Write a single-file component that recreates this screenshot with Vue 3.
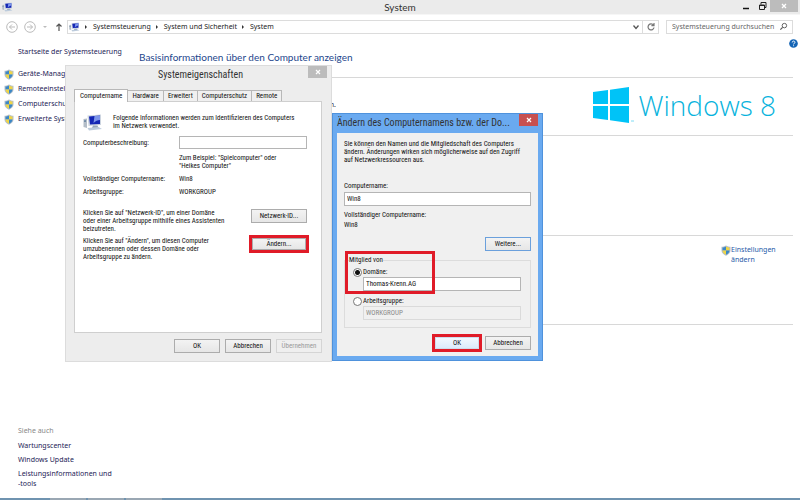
<script setup>
import { ref } from 'vue'

const tasks = ['Geräte-Manager', 'Remoteeinstellungen', 'Computerschutz', 'Erweiterte Systemeinstellungen']
const related = ['Wartungscenter', 'Windows Update', 'Leistungsinformationen und\n-tools']
const crumbs = ['Systemsteuerung', 'System und Sicherheit', 'System']
const tabs = ['Computername', 'Hardware', 'Erweitert', 'Computerschutz', 'Remote']
const activeTab = ref('Computername')
const description = ref('')
const computerName = ref('Win8')
const membership = ref('domain')
const domain = ref('Thomas-Krenn.AG')
const workgroup = ref('WORKGROUP')
const query = ref('')
</script>

<template>
  <svg class="defs" aria-hidden="true">
    <symbol id="shield" viewBox="0 0 20 22">
      <path d="M10 1C7 3 4 3.500 1 3.500V11c0 5 4 8 9 10.500C15 19 19 16 19 11V3.500C16 3.500 13 3 10 1z" fill="#b4bfca" />
      <path d="M10 3C8 4.500 5 5 3 5v6h7z" fill="#3b87c6" />
      <path d="M10 3c2 1.500 5 2 7 2v6h-7z" fill="#eed548" />
      <path d="M3 11h7v8.500C6 17.500 3 15 3 11z" fill="#eed548" />
      <path d="M17 11h-7v8.500c4-2 7-4.500 7-8.500z" fill="#3b87c6" />
    </symbol>
    <symbol id="pc" viewBox="0 0 40 32">
      <path d="M1 9l7-1v19l-7-2z" fill="#b3bdc8" />
      <path d="M2 12l4-.6v3l-4 .3z" fill="#5c7d9c" />
      <path d="M9 2l27-2v21l-25 2z" fill="#cdd5e0" />
      <path d="M12 4l22-2v17l-20 1z" fill="#1426b4" />
      <path d="M23 3l11-1v9c-5 0-9 2-13 6z" fill="#7d95ea" />
      <path d="M20 22h9l2 5H18z" fill="#98a7ba" />
      <path d="M9 27l22-2 7 4-26 3z" fill="#bccbdc" />
    </symbol>
  </svg>

  <main class="desktop">
    <header class="titlebar">
      <svg class="pc-small"><use href="#pc" /></svg>
      <h1>System</h1>
      <div class="controls">
        <button aria-label="Minimieren"><svg viewBox="0 0 10 10"><path d="M2 7.500h6" stroke="#111" stroke-width="1.500" /></svg></button>
        <button aria-label="Verkleinern"><svg viewBox="0 0 10 10" fill="none" stroke="#222"><path d="M2.500 4h5v4.500h-5zM2.500 4.500h5M4 3.500V1.500h5v5H8" /></svg></button>
        <button class="close" aria-label="Schließen"><svg viewBox="0 0 10 10"><path d="M3 3l4 4M7 3l-4 4" stroke="#fff" stroke-width="1.300" /></svg></button>
      </div>
    </header>

    <nav class="toolbar" aria-label="Adressleiste">
      <button aria-label="Zurück"><svg class="round" viewBox="0 0 12 12"><circle cx="6" cy="6" r="5.300" /><path d="M9 6H3.500M6 3.500L3.500 6 6 8.500" /></svg></button>
      <button aria-label="Vorwärts"><svg class="round" viewBox="0 0 12 12"><circle cx="6" cy="6" r="5.300" /><path d="M3 6h5.500M6 3.500L8.500 6 6 8.500" /></svg></button>
      <button class="history" aria-label="Verlauf"><svg viewBox="0 0 6 4"><path d="M1 1h4L3 3z" fill="#bbb" /></svg></button>
      <button class="up" aria-label="Nach oben"><svg viewBox="0 0 8 10"><path d="M4 9V2M1.500 4.500L4 2l2.500 2.500" fill="none" stroke="#555" stroke-width="1.200" /></svg></button>
      <div class="address">
        <svg class="pc-small"><use href="#pc" /></svg>
        <template v-for="crumb in crumbs" :key="crumb">
          <svg class="sep" viewBox="0 0 4 6"><path d="M1 1l2 2-2 2z" fill="#333" /></svg>
          <a href="#">{{ crumb }}</a>
        </template>
        <button class="drop" aria-label="Adressen"><svg viewBox="0 0 8 8"><path d="M1.500 2.500L4 5.500l2.500-3" fill="none" stroke="#555" stroke-width="1.300" /></svg></button>
        <button class="reload" aria-label="Aktualisieren"><svg viewBox="0 0 10 10"><path d="M7.500 3.200A3 3 0 1 0 8 5.500M8 1v2.600H5.400" fill="none" stroke="#777" stroke-width="1.200" /></svg></button>
      </div>
      <label class="search">
        <input v-model="query" type="text" placeholder="Systemsteuerung durchsuchen" aria-label="Systemsteuerung durchsuchen">
        <svg viewBox="0 0 10 10"><circle cx="6" cy="4" r="2.500" fill="none" stroke="#555" /><path d="M4 6L1.500 8.500" stroke="#555" stroke-width="1.300" /></svg>
      </label>
    </nav>

    <div class="body">
      <aside>
        <a class="home" href="#">Startseite der Systemsteuerung</a>
        <ul class="tasks">
          <li v-for="task in tasks" :key="task"><svg class="shield"><use href="#shield" /></svg><a href="#">{{ task }}</a></li>
        </ul>
        <h2>Siehe auch</h2>
        <ul class="related">
          <li v-for="item in related" :key="item"><a href="#">{{ item }}</a></li>
        </ul>
      </aside>

      <section class="info">
        <button class="help" aria-label="Hilfe"><svg viewBox="0 0 10 10"><circle cx="5" cy="5" r="4.800" fill="#1565b5" /><path d="M3.600 3.800c0-2 3-2 3-.1 0 1-1.500 1.100-1.500 2.300M5.100 7v1" fill="none" stroke="#fff" stroke-width="1.100" /></svg></button>
        <h2>Basisinformationen über den Computer anzeigen</h2>
        <div class="edition">
          <p>© 2012 Microsoft Corporation. Alle Rechte vorbehalten.</p>
          <div class="brand">
            <svg viewBox="0 0 42 36"><path d="M0 5l15-2v14H0zM17 2.700L36 0v17H17zM0 19h15v14L0 31zM17 19h19v17l-19-2.700z" fill="#00c3f7" /><path d="M38 34h3" stroke="#7fdcf4" /></svg>
            <span>Windows 8</span>
          </div>
        </div>
        <div class="system"></div>
        <div class="names">
          <a href="#"><svg class="shield"><use href="#shield" /></svg><span>Einstellungen ändern</span></a>
        </div>
        <div class="activation"></div>
      </section>
    </div>
    <footer class="taskbar"><i></i><i></i><i></i></footer>

    <section class="dialog props" aria-label="Systemeigenschaften">
      <header><h2>Systemeigenschaften</h2><button class="x" aria-label="Schließen"><svg viewBox="0 0 10 10"><path d="M2.500 2.500l5 5M7.500 2.500l-5 5" /></svg></button></header>
      <div class="tabs" role="tablist">
        <button v-for="tab in tabs" :key="tab" role="tab" :aria-selected="tab === activeTab" :class="{ active: tab === activeTab }" @click="activeTab = tab">{{ tab }}</button>
      </div>
      <div class="pane">
        <div class="intro"><svg><use href="#pc" /></svg><p>Folgende Informationen werden zum Identifizieren des Computers<br>im Netzwerk verwendet.</p></div>
        <div class="grid">
          <label for="desc">Computerbeschreibung:</label>
          <input id="desc" v-model="description" type="text">
          <p class="example">Zum Beispiel: "Spielcomputer" oder<br>"Heikes Computer"</p>
          <span>Vollständiger Computername:</span><span>Win8</span>
          <span>Arbeitsgruppe:</span><span>WORKGROUP</span>
        </div>
        <div class="action first"><p>Klicken Sie auf "Netzwerk-ID", um einer Domäne<br>oder einer Arbeitsgruppe mithilfe eines Assistenten<br>beizutreten.</p><button class="btn">Netzwerk-ID...</button></div>
        <div class="action"><p>Klicken Sie auf "Ändern", um diesen Computer<br>umzubenennen oder dessen Domäne oder<br>Arbeitsgruppe zu ändern.</p><span class="marked"><button class="btn">Ändern...</button></span></div>
      </div>
      <div class="buttons"><button class="btn">OK</button><button class="btn">Abbrechen</button><button class="btn" disabled>Übernehmen</button></div>
    </section>

    <section class="dialog rename" aria-label="Ändern des Computernamens">
      <header><h2>Ändern des Computernamens bzw. der Do...</h2><button class="x" aria-label="Schließen"><svg viewBox="0 0 10 10"><path d="M2.500 2.500l5 5M7.500 2.500l-5 5" /></svg></button></header>
      <div class="client">
        <p>Sie können den Namen und die Mitgliedschaft des Computers<br>ändern. Änderungen wirken sich möglicherweise auf den Zugriff<br>auf Netzwerkressourcen aus.</p>
        <label class="name-label" for="cname">Computername:</label>
        <input id="cname" v-model="computerName" type="text">
        <p class="full">Vollständiger Computername:<br>Win8</p>
        <button class="btn more">Weitere...</button>
        <fieldset>
          <legend>Mitglied von</legend>
          <label><input v-model="membership" type="radio" name="member" value="domain">Domäne:</label>
          <input v-model="domain" type="text" aria-label="Domäne" :disabled="membership !== 'domain'">
          <label class="second"><input v-model="membership" type="radio" name="member" value="workgroup">Arbeitsgruppe:</label>
          <input v-model="workgroup" type="text" aria-label="Arbeitsgruppe" :disabled="membership !== 'workgroup'">
          <div class="frame"></div>
        </fieldset>
        <div class="buttons"><span class="marked"><button class="btn primary">OK</button></span><button class="btn">Abbrechen</button></div>
      </div>
    </section>
  </main>
</template>

<style>
body { margin: 0; background: #fff; overflow: hidden; }
</style>

<style scoped>
* { box-sizing: border-box; }
.defs { position: absolute; width: 0; height: 0; }
.desktop { position: relative; display: flex; flex-direction: column; min-height: 100vh; font: 7px/10px "Noto Sans", "Open Sans", sans-serif; color: #1d1d3c; }
h1, h2, p, ul { margin: 0; padding: 0; font-weight: 400; }
ul { list-style: none; }
a { color: #1b1b55; text-decoration: none; }
button { margin: 0; padding: 0; border: 0; background: none; font: inherit; color: inherit; display: flex; align-items: center; justify-content: center; }
input { font: inherit; color: inherit; margin: 0; }
svg { display: block; flex: none; }
.shield { width: 10px; height: 11px; }
.pc-small { width: 11px; height: 10px; }

.titlebar { display: grid; grid-template-columns: 1fr auto 1fr; height: 14px; padding: 0 2px; background: #ebebeb; }
.titlebar .pc-small { margin-top: 2px; }
h1 { font: 10px/14px Lato, "Open Sans", sans-serif; color: #333; }
.controls { display: flex; justify-content: flex-end; }
.controls button { width: 16px; height: 12px; }
.controls svg { width: 10px; height: 10px; }
.controls .close { width: 28px; background: #bcbcbc; }

.toolbar { display: flex; align-items: center; height: 24px; padding: 0 7px 0 6px; border-top: 1px solid #f6f6f6; }
.round { width: 12px; height: 12px; fill: none; stroke: #bbb; }
.toolbar > button + button { margin-left: 6px; }
.history svg { width: 6px; height: 4px; }
.toolbar > .up { margin: 0 4px 0 7px; }
.up svg { width: 8px; height: 10px; }
.address { display: flex; align-items: center; flex: 1; height: 14px; border: 1px solid #dcdcdc; padding-left: 1px; }
.address a { color: #222; }
.sep { width: 4px; height: 6px; margin: 0 5px 0 4px; }
.address .drop { margin-left: auto; width: 12px; height: 12px; }
.drop svg { width: 8px; height: 8px; }
.reload { width: 16px; height: 12px; border-left: 1px solid #dcdcdc; }
.reload svg { width: 10px; height: 10px; }
.search { display: flex; align-items: center; width: 127px; height: 14px; margin-left: 7px; padding: 0 4px 0 5px; border: 1px solid #dcdcdc; }
.search input { flex: 1; min-width: 0; padding: 0; border: 0; outline: 0; }
.search input::placeholder { color: #666; opacity: 1; }
.search svg { width: 9px; height: 9px; }

.body { display: flex; flex: 1; }
aside { display: flex; flex-direction: column; width: 132px; padding: 9px 0 9px 4px; }
.home { padding-left: 14px; }
.tasks { display: grid; gap: 4px; margin-top: 12px; white-space: nowrap; }
.tasks li { display: flex; gap: 4px; height: 11px; }
aside h2 { margin-top: auto; padding-left: 14px; font-size: 7px; line-height: 10px; color: #888; }
.related { display: grid; gap: 4px; padding: 5px 0 0 14px; white-space: pre-line; }
.info { flex: 1; padding: 1px 7px 0 7px; }
.info h2 { font: 10px/14px Lato, "Open Sans", sans-serif; color: #24468c; }
.help { margin: 0 -5px 2px auto; width: 9px; height: 9px; }
.help svg { width: 9px; height: 9px; }
.edition { display: flex; justify-content: space-between; margin-top: 13px; height: 58px; border-top: 1px solid #d8d8d8; }
.edition p { flex: none; width: 197px; padding-top: 22px; text-align: right; white-space: nowrap; }
.brand { display: flex; gap: 4px; height: 36px; margin: 9px 17px 0 0; color: #08b3dd; font: 300 28px/36px "Open Sans", sans-serif; white-space: nowrap; }
.brand svg { width: 42px; height: 36px; }
.system { height: 100px; border-top: 1px solid #d8d8d8; }
.names { display: flex; justify-content: flex-end; height: 89px; padding: 9px 0; border-top: 1px solid #d8d8d8; }
.names a { display: flex; width: 72px; height: 20px; color: #1e5aa8; }
.activation { border-top: 1px solid #d8d8d8; }
.taskbar { display: flex; gap: 2px; height: 2px; padding-left: 50px; background: #6f93b0; }
.taskbar i { width: 36px; background: #9aa7b3; }

.dialog { position: absolute; color: #111; font: 7px/8px "Roboto Condensed", Roboto, sans-serif; white-space: nowrap; }
.dialog header { display: flex; justify-content: center; }
.dialog header h2 { min-width: 0; font: 10px/18px "Roboto Condensed", Roboto, sans-serif; color: #333; }
.x svg { width: 8px; height: 8px; stroke: #fff; stroke-width: 1.500; }
.btn { height: 14px; width: 46px; border: 1px solid #acacac; background: linear-gradient(#f3f3f3, #e6e6e6); }
.btn:disabled { color: #9a9a9a; border-color: #d5d5d5; background: #efefef; }
.btn.primary { background: linear-gradient(#f2f8ff, #dcebfc); border-color: #cfdcec; }
.marked { display: flex; border: 3px solid #e01b28; margin: -2px; }
.marked .btn { width: 44px; height: 12px; }
.dialog input[type="text"] { height: 13px; padding: 0 2px; border: 1px solid #b5b5b5; background: #fff; min-width: 0; }
.dialog input[type="text"]:disabled { color: #8a8a8a; border-color: #dadada; background: #f0f0f0; }
.buttons { display: flex; justify-content: flex-end; gap: 5px; margin-top: 6px; }

.props { left: 65px; top: 65px; width: 267px; padding: 0 9px 8px 8px; background: #ededed; border: 1px solid #dcdcdc; }
.props header { position: relative; height: 23px; margin-right: -5px; }
.props .x { position: absolute; right: 0; top: 0; width: 19px; height: 12px; background: #bcbcbc; }
.tabs { display: flex; align-items: flex-end; height: 12px; }
.tabs button { height: 11px; padding: 0 4px; border: 1px solid #b8b8b8; border-width: 1px 1px 0 0; background: #f0f0f0; }
.tabs .active { height: 13px; padding: 0 5px; border-left-width: 1px; background: #fff; margin-bottom: -1px; z-index: 1; }
.pane { height: 232px; padding: 12px 14px 0 8px; border: 1px solid #cfcfcf; background: #fff; }
.intro { display: flex; gap: 10px; }
.intro svg { width: 20px; height: 17px; }
.grid { display: grid; grid-template-columns: 96px 1fr; row-gap: 5px; align-items: center; margin-top: 5px; }
.example { grid-column: 2; }
.action { display: flex; justify-content: space-between; align-items: flex-start; margin-top: 4px; }
.first { margin-top: 13px; }
.action .btn { width: 56px; }
.action .marked .btn { width: 54px; }

.rename { left: 332px; top: 113px; width: 211px; padding: 0 4px 4px; background: #6aaaf0; border: 1px solid #4f92dc; }
.rename header { justify-content: space-between; height: 19px; }
.rename .x { width: 19px; height: 12px; background: #c75050; }
.client { padding: 7px 7px 6px; background: #f0f0f0; }
.client input[type="text"] { display: block; width: 100%; height: 14px; }
.name-label { display: block; margin: 18px 0 2px; }
.full { margin-top: 4px; line-height: 10px; }
.more { margin: 7px 0 0 auto; border-color: #6ba0dc; }
fieldset { position: relative; margin: 5px 0 0; padding: 3px 9px 7px 8px; border: 1px solid #dcdcdc; }
legend { padding: 0; margin-left: -4px; }
fieldset label { display: flex; align-items: center; gap: 1px; height: 10px; }
fieldset input[type="radio"] { appearance: none; width: 9px; height: 9px; border: 1px solid #777; border-radius: 50%; background: #fff; }
fieldset input[type="radio"]:checked { background: radial-gradient(circle, #111 2px, #fff 3px); }
.client fieldset input[type="text"] { width: calc(100% - 10px); margin-left: 10px; }
fieldset .second { margin-top: 5px; }
.frame { position: absolute; left: 0; top: -13px; width: 90px; height: 43px; border: 3px solid #e01b28; }
.client .buttons { margin-top: 8px; }
</style>
